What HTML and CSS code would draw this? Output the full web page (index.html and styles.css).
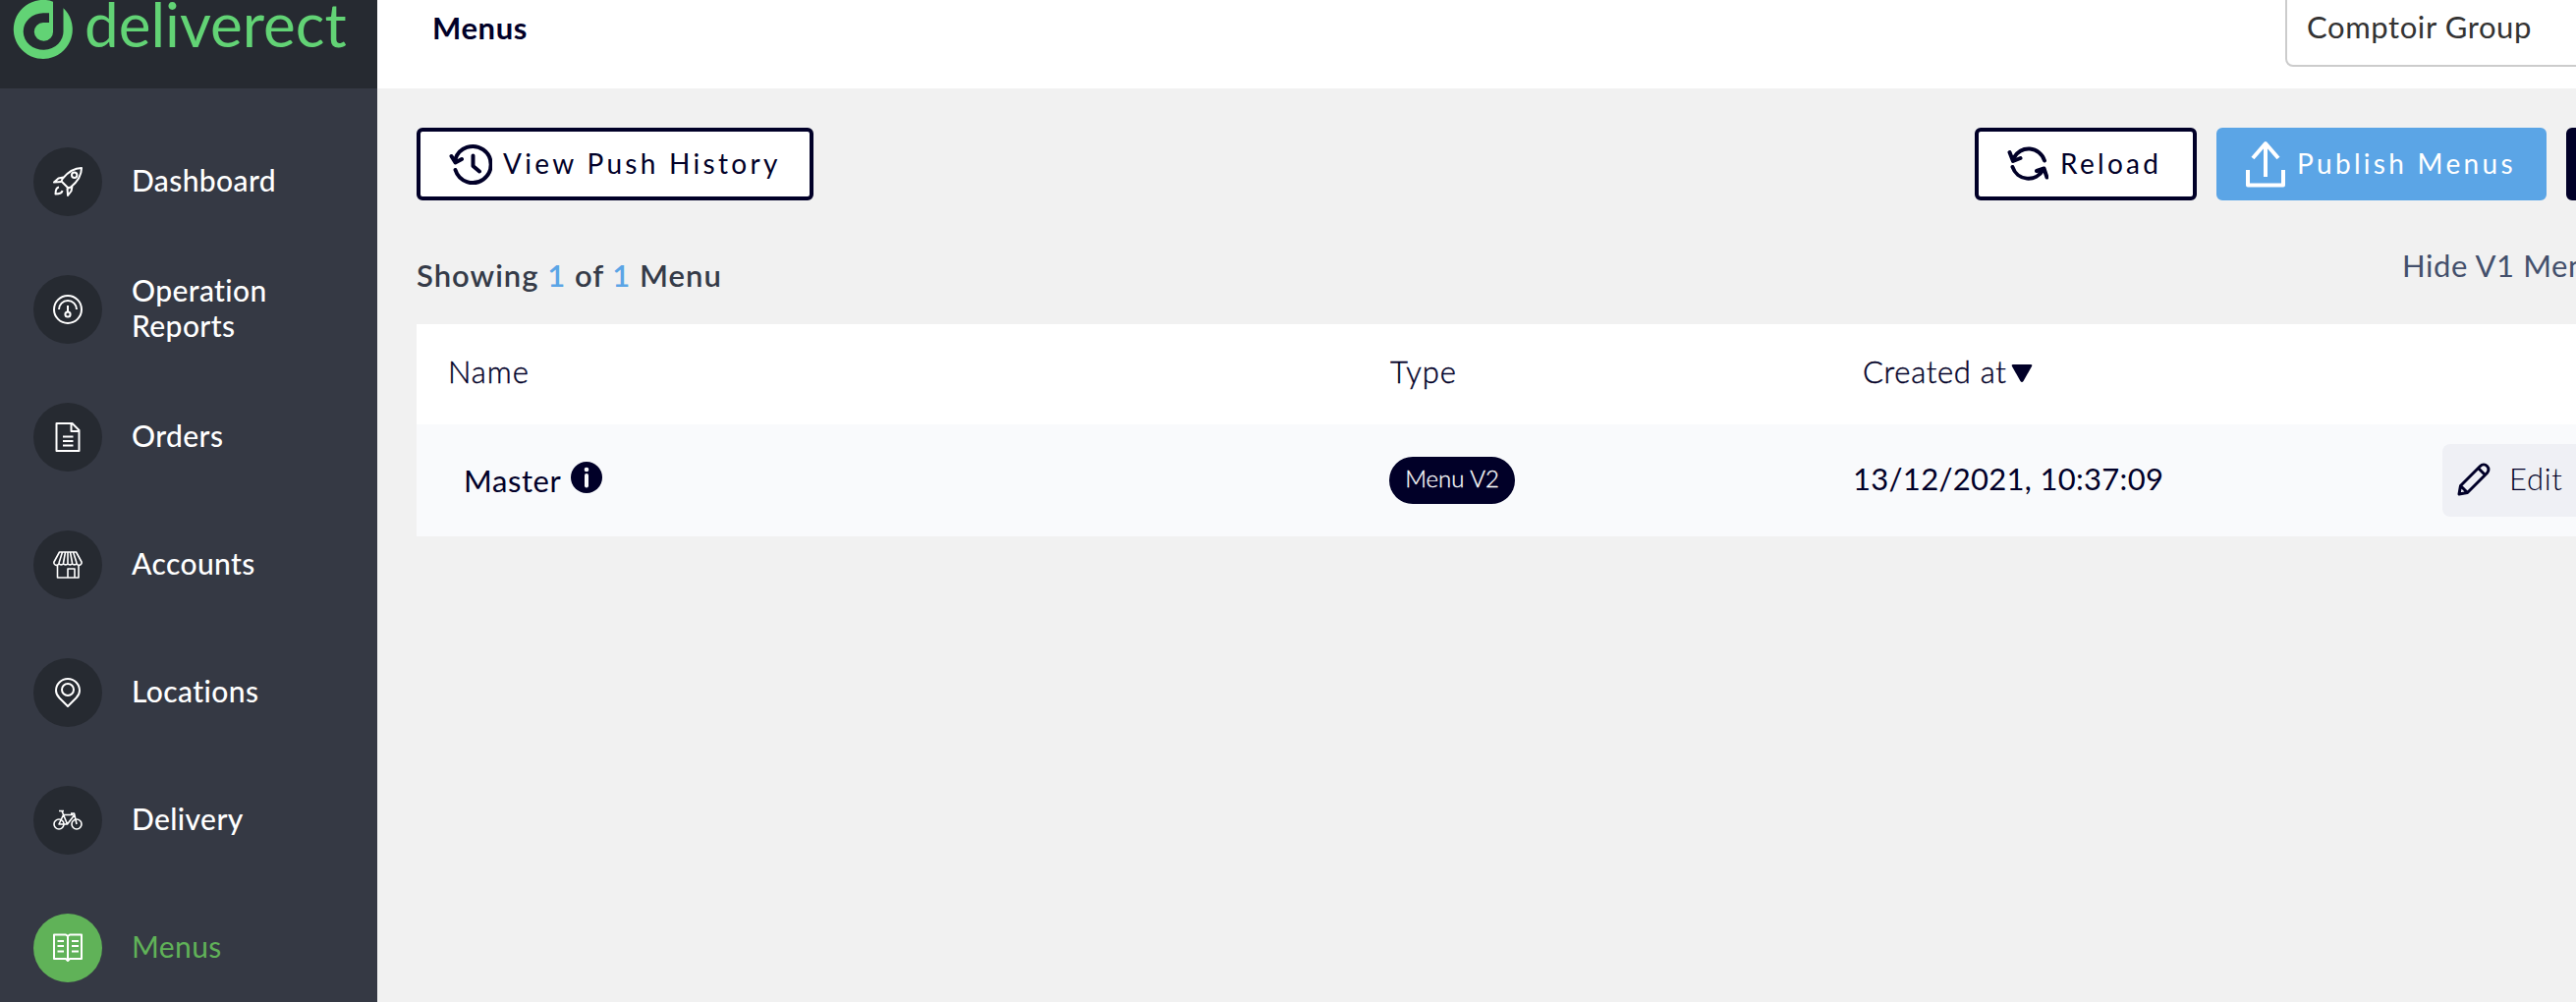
FILE: index.html
```html
<!DOCTYPE html>
<html lang="en">
<head>
    <meta charset="UTF-8">
    <meta name="viewport" content="width=device-width, initial-scale=1.0">
    <title>Menus</title>
    <link rel="stylesheet" href="styles.css">
</head>
<body>

    <!-- Sidebar -->
    <aside class="sidebar">
        <div class="logo">
            <svg width="62" height="62" viewBox="13 -1 62 62">
                <path fill="#62d375" d="M54 1.7A30 30 0 1 0 64.5 8.2V31A20.4 18.8 0 1 1 44 13.2H50V23H44A9.6 9.4 0 1 0 54 32Z"/>
            </svg>
            <span class="logo-text">deliverect</span>
        </div>
        <nav>
            <a class="nav-item">
                <span class="nav-icon">
                    <svg viewBox="0 0 30 30">
                        <path d="M29 1C22 1 16 4 9.500 12L8.500 14.500 15.500 21.500 18 20.500C26 14 29 8 29 1Z"/>
                        <circle cx="21.700" cy="8.300" r="2.700"/>
                        <path d="M10.500 10.500 5.500 11.500 1 15.500 8.500 15M19.500 19.500 18.500 24.500 15 29 14.500 21.500M6 20.500C3 21 2.500 24 2.500 27.500 6 27.500 9 27 9.500 24"/>
                    </svg>
                </span>
                <span class="nav-label">Dashboard</span>
            </a>
            <a class="nav-item">
                <span class="nav-icon">
                    <svg viewBox="0 0 30 30">
                        <circle cx="15" cy="15" r="14"/>
                        <path d="M6 15A9 9 0 0 1 24 15M15 11V17"/>
                        <circle cx="15" cy="20" r="2.600"/>
                    </svg>
                </span>
                <span class="nav-label">Operation<br>Reports</span>
            </a>
            <a class="nav-item">
                <span class="nav-icon">
                    <svg viewBox="0 0 30 30">
                        <path d="M3.500 1H19.500L26.500 8V29H3.500ZM18.500 1V9H26.500M10 14.500H20.500M10 19H20.500M10 23.500H20.500"/>
                    </svg>
                </span>
                <span class="nav-label">Orders</span>
            </a>
            <a class="nav-item">
                <span class="nav-icon thin">
                    <svg viewBox="0 0 30 30">
                        <path d="M6.500 2H23.500L29 12A2.500 2.500 0 0 1 24 13.500A2.500 2.500 0 0 1 19.500 13.500A2.500 2.500 0 0 1 15 13.500A2.500 2.500 0 0 1 10.500 13.500A2.500 2.500 0 0 1 6 13.500A2.500 2.500 0 0 1 1 12ZM9.500 2 6 13M12.500 2 10.500 13M15 2V13M17.500 2 19.500 13M20.500 2 24 13M4.500 15V28H26V15M15 28V19H22V28"/>
                    </svg>
                </span>
                <span class="nav-label">Accounts</span>
            </a>
            <a class="nav-item">
                <span class="nav-icon">
                    <svg viewBox="0 0 30 30">
                        <path d="M15 29 6.500 20.500C3.500 17.500 3 15 3 13A12 12 0 0 1 27 13C27 15 26.500 17.500 23.500 20.500Z"/>
                        <circle cx="15" cy="12" r="6"/>
                    </svg>
                </span>
                <span class="nav-label">Locations</span>
            </a>
            <a class="nav-item">
                <span class="nav-icon thin">
                    <svg viewBox="0 0 30 30">
                        <circle cx="6" cy="19" r="5"/>
                        <circle cx="24" cy="19" r="5"/>
                        <path d="M6 5.500H11M9 5.500 14.500 19H6L10.500 9.500H20.500M14.500 19 21.500 10M18 8H21.500L24 19"/>
                    </svg>
                </span>
                <span class="nav-label">Delivery</span>
            </a>
            <a class="nav-item active">
                <span class="nav-icon">
                    <svg viewBox="0 0 30 30">
                        <path d="M1 1.500H13L15 3 17 1.500H29V26H17L15 28 13 26H1ZM15 3V28M4.500 8H11M4.500 13H11M4.500 18.500H11M19 8H26M19 13H26M19 18.500H26"/>
                    </svg>
                </span>
                <span class="nav-label">Menus</span>
            </a>
        </nav>
    </aside>

    <!-- Main content -->
    <main class="main">
        <header class="header">
            <h1>Menus</h1>
            <div class="account-select">Comptoir Group</div>
        </header>

        <div class="toolbar">
            <button class="btn history">
                <svg width="44" height="44" viewBox="0 0 44 44">
                    <path d="M6.500 17A18.500 18.500 0 1 1 6.500 28M2.500 14 6.500 20.500 13 17M24.500 13.500V24L31 29.500"/>
                </svg>
                <span>View Push History</span>
            </button>
            <button class="btn reload">
                <svg width="42" height="44" viewBox="0 0 42 44">
                    <path d="M6.500 16A17 17 0 0 1 38 18.500M2.500 10 6 19 13.500 16M5.500 25A17 17 0 0 0 36.500 28M40.500 35.500 37.500 26.500 30 29"/>
                </svg>
                <span>Reload</span>
            </button>
            <button class="btn btn-blue publish">
                <svg width="40" height="48" viewBox="0 0 40 48">
                    <path d="M20 37V3M7 18 20 3 33 18M2 30V45.500H38V30"/>
                </svg>
                <span>Publish Menus</span>
            </button>
            <button class="btn btn-dark" aria-label="Add menu"></button>
        </div>

        <div class="summary">
            <p class="count">Showing <span>1</span> of <span>1</span> Menu</p>
            <span class="toggle-label">Hide V1 Menus</span>
        </div>

        <div class="table">
            <div class="row head">
                <div class="col-name">Name</div>
                <div class="col-type">Type</div>
                <div class="col-created">
                    <span class="created-title">Created at</span>
                    <svg width="22" height="20" viewBox="0 0 22 20">
                        <path fill="#010028" d="M2 1H20Q22 1 21 3L12.500 18Q11 20 9.500 18L1 3Q0 1 2 1Z"/>
                    </svg>
                </div>
            </div>
            <div class="row">
                <div class="col-name">
                    <span class="menu-name">Master</span>
                    <svg class="info" width="32" height="32" viewBox="0 0 32 32">
                        <circle cx="16" cy="16" r="16" fill="#010028"/>
                        <circle cx="16" cy="8" r="2.300" fill="#f9fafc"/>
                        <rect x="14" y="12" width="4" height="14.500" rx="2" fill="#f9fafc"/>
                    </svg>
                </div>
                <div class="col-type"><span class="pill">Menu V2</span></div>
                <div class="col-created"><span class="date">13/12/2021, 10:37:09</span></div>
                <button class="edit">
                    <svg width="34" height="34" viewBox="0 0 34 34">
                        <path d="M2 32 3.500 23.500 23.500 3.500A4.800 4.800 0 0 1 30.500 10.500L10.500 30.500ZM21.500 5.500 28.500 12.500M3.500 23.500 10.500 30.500"/>
                    </svg>
                    <span>Edit</span>
                </button>
            </div>
        </div>
    </main>

</body>
</html>
```
FILE: styles.css
```css
* {
    box-sizing: border-box;
}
body {
    margin: 0;
    display: flex;
    height: 100vh;
    overflow: hidden;
    background: #f1f1f1;
    color: #010028;
    font-family: Lato, "Open Sans", sans-serif;
    font-size: 31px;
    font-variant-ligatures: none;
    letter-spacing: 0.6px;
}
svg {
    flex: none;
}

/* Sidebar */
.sidebar {
    flex: none;
    width: 384px;
    height: 100vh;
    overflow: hidden;
    background: #353944;
}
.logo {
    display: flex;
    height: 90px;
    padding-left: 13px;
    margin-bottom: 30px;
    background: #262a31;
}
.logo svg {
    margin-top: -1px;
}
.logo-text {
    margin: -12px 0 0 11px;
    font-size: 62px;
    line-height: 72px;
    letter-spacing: 0;
    color: #62d375;
}
.nav-item {
    display: flex;
    align-items: center;
    height: 130px;
    padding-left: 34px;
    color: #fff;
}
.nav-icon {
    display: flex;
    align-items: center;
    justify-content: center;
    width: 70px;
    height: 70px;
    border-radius: 50%;
    background: #262a31;
}
.nav-icon svg {
    width: 30px;
    height: 30px;
    fill: none;
    stroke: #fff;
    stroke-width: 2;
    stroke-linejoin: round;
}
.nav-icon.thin svg {
    stroke-width: 1.6;
}
.nav-label {
    margin-left: 30px;
    padding-bottom: 5px;
    font-size: 30px;
    line-height: 36px;
    font-weight: 500;
    letter-spacing: 0.4px;
}
.active {
    color: #60b258;
}
.active .nav-icon {
    background: #60b258;
}
.active .nav-label {
    font-weight: 400;
}

/* Header */
.main {
    flex: none;
    width: 2508px;
}
.header {
    display: flex;
    height: 90px;
    padding-left: 56px;
    background: #fff;
}
.header h1 {
    width: 1886px;
    margin: 9px 0 0;
    font-size: 31px;
    line-height: 38px;
}
.account-select {
    width: 400px;
    height: 76px;
    margin-top: -8px;
    padding: 14px 0 0 20px;
    border: 2px solid #ccc;
    border-radius: 8px;
    color: #333;
    line-height: 38px;
}

/* Buttons */
.toolbar {
    display: flex;
    gap: 20px;
    padding: 40px 0 0 40px;
}
.btn {
    display: flex;
    align-items: center;
    height: 74px;
    padding: 0 0 0 29px;
    border: 4px solid #010028;
    border-radius: 6px;
    background: #fff;
    color: #010028;
    font-family: inherit;
    font-size: 28px;
    letter-spacing: 3.3px;
    white-space: nowrap;
}
.btn svg {
    fill: none;
    stroke: currentColor;
    stroke-width: 4;
    stroke-linecap: round;
    stroke-linejoin: round;
}
.btn span {
    padding-bottom: 2px;
}
.history {
    width: 404px;
    margin-right: auto;
}
.history span {
    margin-left: 11px;
}
.reload {
    width: 226px;
}
.reload span {
    margin-left: 12px;
}
.btn-blue {
    width: 336px;
    border-color: #5ba5e6;
    background: #5ba5e6;
    color: #fff;
}
.publish {
    padding-left: 26px;
}
.publish svg {
    stroke-linecap: butt;
}
.publish span {
    margin-left: 12px;
}
.btn-dark {
    width: 280px;
    background: #010028;
}

/* Menu count */
.summary {
    display: flex;
    height: 126px;
    padding-left: 40px;
}
.count {
    width: 2021px;
    margin: 56px 0 0;
    line-height: 40px;
    font-weight: 600;
    letter-spacing: 1px;
    color: #353b48;
}
.count span {
    color: #5ba5e6;
}
.toggle-label {
    margin-top: 46px;
    line-height: 40px;
    color: #44506c;
    white-space: nowrap;
}

/* Table */
.table {
    margin-left: 40px;
}
.row {
    display: flex;
    align-items: center;
    height: 114px;
    background: #f9fafc;
}
.head {
    height: 102px;
    padding-bottom: 6px;
    background: #fff;
    font-weight: 300;
    letter-spacing: 1px;
    -webkit-text-stroke: 0.4px currentColor;
}
.col-name {
    display: flex;
    width: 990px;
    padding-left: 32px;
}
.row:not(.head) .col-name {
    padding-left: 48px;
}
.col-type {
    width: 480px;
}
.col-created {
    display: flex;
    align-items: center;
    width: 592px;
}
.head .col-type {
    padding-left: 1px;
}
.created-title {
    margin: 0 4px 0 2px;
    letter-spacing: 0.7px;
}
.head .col-created svg {
    margin-top: 4px;
}
.row:not(.head) .col-type {
    width: 472px;
}
.row:not(.head) .col-created {
    width: 600px;
}
.date {
    padding-bottom: 4px;
    letter-spacing: 0.3px;
}
.info {
    margin: 0 0 1px 10px;
}
.pill {
    display: block;
    width: 128px;
    height: 48px;
    border-radius: 24px;
    background: #010028;
    color: #fff;
    font-size: 24px;
    font-weight: 300;
    line-height: 43px;
    letter-spacing: 0;
    text-align: center;
    -webkit-text-stroke: 0.3px currentColor;
}
.edit {
    display: flex;
    align-items: center;
    width: 240px;
    height: 74px;
    padding: 0 0 0 15px;
    border: 0;
    border-radius: 8px;
    background: #eff0f5;
    color: #010028;
    font-family: inherit;
    font-size: 31px;
    font-weight: 300;
    letter-spacing: 0.7px;
}
.edit svg {
    margin-bottom: 3px;
    fill: none;
    stroke: currentColor;
    stroke-width: 3;
    stroke-linejoin: round;
}
.edit span {
    margin-left: 19px;
    padding-bottom: 4px;
}
```
